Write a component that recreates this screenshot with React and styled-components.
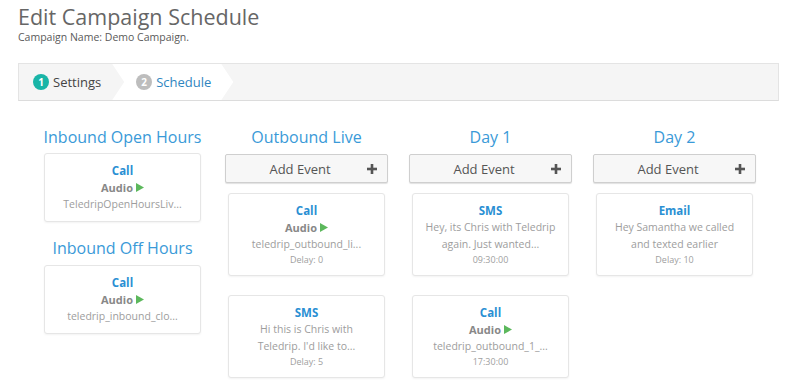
import React from "react";
import styled, { createGlobalStyle } from "styled-components";

const Global = createGlobalStyle`
  html, body { margin: 0; padding: 0; background: #fff; }
  body { font-family: "Open Sans", "Noto Sans", sans-serif; color: #555; }
`;

const Page = styled.div`
  padding: 4px 21px 0 18px;
`;

const Title = styled.h1`
  margin: 0;
  font-size: 21.5px;
  line-height: 25px;
  font-weight: 400;
  color: #666;
`;

const Subtitle = styled.div`
  font-size: 10.5px;
  line-height: 14px;
  color: #5a5a5a;
  margin-top: 1px;
`;

const Wizard = styled.div`
  margin-top: 19px;
  height: 36px;
  background: #f5f5f5;
  border: 1px solid #e4e4e4;
  border-bottom-color: #dcdcdc;
  display: flex;
  align-items: stretch;
`;

const Step = styled.div`
  display: flex;
  align-items: center;
  gap: 4px;
  font-size: 13px;
  color: ${(p) => (p.$active ? "#2f86bf" : "#444")};
  background: ${(p) => (p.$active ? "#fff" : "transparent")};
  padding: ${(p) => (p.$active ? "0 22px 0 24px" : "0 13px 0 14px")};
  margin-left: ${(p) => (p.$active ? "-2px" : "0")};
  clip-path: ${(p) =>
    p.$active
      ? "polygon(0 0, calc(100% - 12px) 0, 100% 50%, calc(100% - 12px) 100%, 0 100%, 12px 50%)"
      : "none"};
`;

const Badge = styled.span`
  width: 16px;
  height: 16px;
  border-radius: 50%;
  background: ${(p) => p.$color};
  color: #fff;
  font-size: 10px;
  font-weight: 700;
  display: inline-flex;
  align-items: center;
  justify-content: center;
`;

const Board = styled.div`
  margin-top: 24px;
  padding-left: 23px;
  display: grid;
  grid-template-columns: repeat(4, 163px);
  column-gap: 21px;
  align-items: start;
`;

const Column = styled.div`
  display: flex;
  flex-direction: column;
  align-items: stretch;
`;

const ColTitle = styled.div`
  text-align: center;
  font-size: 16px;
  line-height: 24px;
  color: #3a9ad8;
  margin-bottom: ${(p) => (p.$tight ? "4px" : "5px")};
  white-space: nowrap;
`;

const AddButton = styled.button`
  height: 29px;
  background: #f7f7f7;
  border: 1px solid #cfcfcf;
  border-radius: 2px;
  box-shadow: 0 1px 1px rgba(0, 0, 0, 0.12);
  font-family: inherit;
  font-size: 13px;
  color: #555;
  position: relative;
  display: flex;
  align-items: center;
  justify-content: center;
  margin-bottom: 10px;
  padding: 0 13px 0 0;
  cursor: pointer;
`;

const PlusIcon = styled.svg`
  position: absolute;
  right: 10px;
  top: 50%;
  margin-top: -5px;
`;

const Card = styled.div`
  margin: 0 3px ${(p) => p.$mb || "19px"};
  background: #fff;
  border: 1px solid #e6e6e6;
  border-radius: 3px;
  box-shadow: 0 1px 2px rgba(0, 0, 0, 0.05);
  padding: 9px 8px 8px;
  text-align: center;
  min-width: 0;
`;

const CardType = styled.div`
  font-size: 11.5px;
  line-height: 16px;
  font-weight: 700;
  color: #2a8fd3;
`;

const Audio = styled.div`
  font-size: 11px;
  line-height: 17px;
  font-weight: 700;
  color: #888;
  display: flex;
  align-items: center;
  justify-content: center;
  gap: 3px;
`;

const TextLine = styled.div`
  font-size: 10.5px;
  line-height: 17px;
  color: #9d9d9d;
  white-space: nowrap;
  overflow: hidden;
`;

const Meta = styled.div`
  font-size: 9px;
  line-height: 14px;
  color: #a0a0a0;
`;

const Play = () => (
  <svg width="8" height="9" viewBox="0 0 8 9">
    <polygon points="0,0 8,4.5 0,9" fill="#5cb85c" />
  </svg>
);

const Plus = () => (
  <PlusIcon width="10" height="10" viewBox="0 0 10 10">
    <rect x="3.7" y="0" width="2.6" height="10" fill="#555" />
    <rect x="0" y="3.7" width="10" height="2.6" fill="#555" />
  </PlusIcon>
);

const truncate = (s, n = 20) => (s.length > n ? s.slice(0, n) + "..." : s);

const EventCard = ({ type, audio, file, text, meta, mb }) => (
  <Card $mb={mb}>
    <CardType>{type}</CardType>
    {audio && (
      <Audio>
        Audio <Play />
      </Audio>
    )}
    {file && <TextLine>{truncate(file)}</TextLine>}
    {text && text.map((t, i) => <TextLine key={i}>{t}</TextLine>)}
    {meta && <Meta>{meta}</Meta>}
  </Card>
);

const AddEvent = () => (
  <AddButton>
    Add Event
    <Plus />
  </AddButton>
);

export default function App() {
  return (
    <>
      <Global />
      <Page>
        <Title>Edit Campaign Schedule</Title>
        <Subtitle>Campaign Name: Demo Campaign.</Subtitle>
        <Wizard>
          <Step>
            <Badge $color="#19b5a7">1</Badge>
            Settings
          </Step>
          <Step $active>
            <Badge $color="#bdbdbd">2</Badge>
            Schedule
          </Step>
        </Wizard>
        <Board>
          <Column>
            <ColTitle $tight>Inbound Open Hours</ColTitle>
            <EventCard type="Call" audio file="TeledripOpenHoursLiveTransfer" mb="14px" />
            <ColTitle>Inbound Off Hours</ColTitle>
            <EventCard type="Call" audio file="teledrip_inbound_closed_hours" />
          </Column>
          <Column>
            <ColTitle>Outbound Live</ColTitle>
            <AddEvent />
            <EventCard type="Call" audio file="teledrip_outbound_live_transfer" meta="Delay: 0" />
            <EventCard
              type="SMS"
              text={["Hi this is Chris with", "Teledrip. I'd like to..."]}
              meta="Delay: 5"
            />
          </Column>
          <Column>
            <ColTitle>Day 1</ColTitle>
            <AddEvent />
            <EventCard
              type="SMS"
              text={["Hey, its Chris with Teledrip", "again. Just wanted..."]}
              meta="09:30:00"
            />
            <EventCard type="Call" audio file="teledrip_outbound_1_message" meta="17:30:00" />
          </Column>
          <Column>
            <ColTitle>Day 2</ColTitle>
            <AddEvent />
            <EventCard
              type="Email"
              text={["Hey Samantha we called", "and texted earlier"]}
              meta="Delay: 10"
            />
          </Column>
        </Board>
      </Page>
    </>
  );
}
